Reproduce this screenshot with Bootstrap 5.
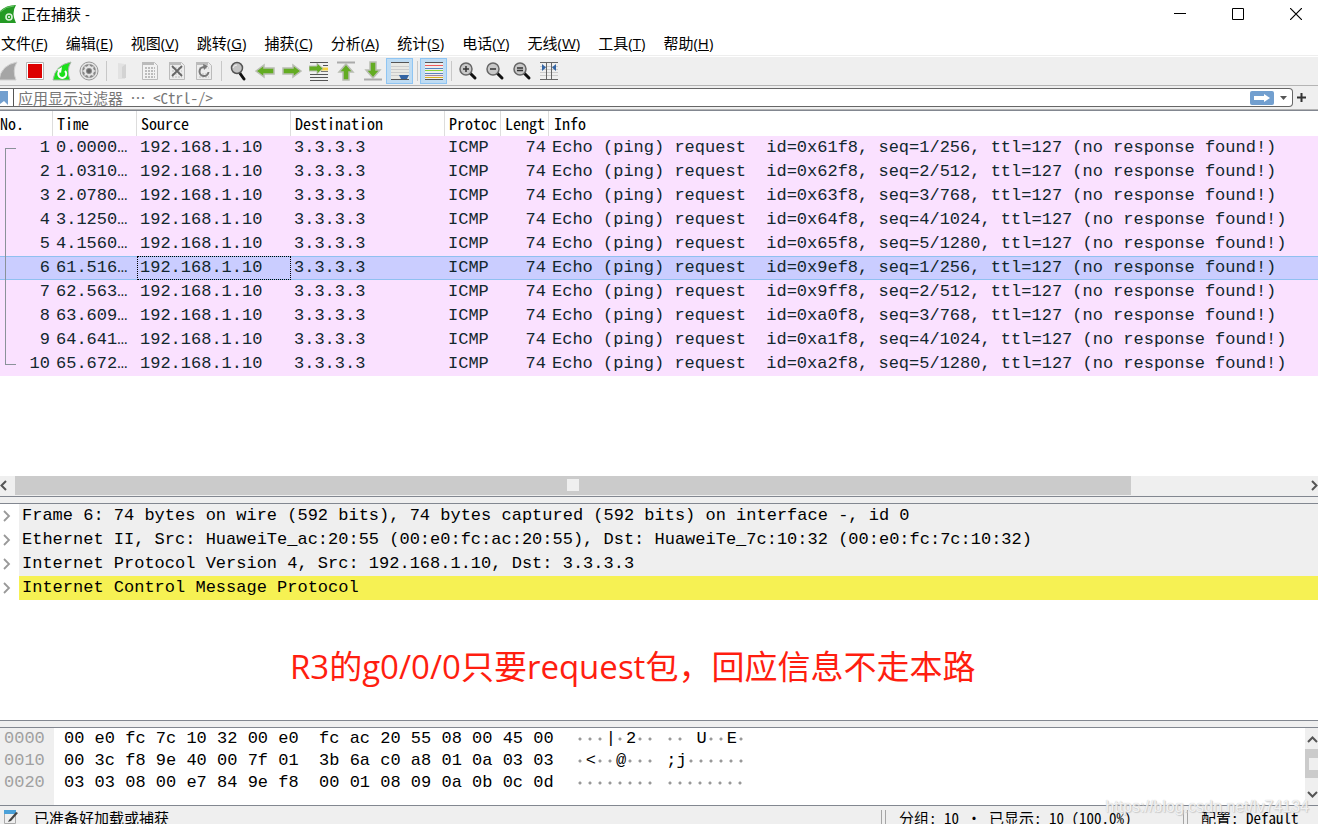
<!DOCTYPE html>
<html lang="zh-CN">
<head>
<meta charset="utf-8">
<meta name="viewport" content="width=device-width, initial-scale=1">
<title>正在捕获 -</title>
<link rel="stylesheet" href="https://cdn.jsdelivr.net/npm/bootstrap@5.3.0/dist/css/bootstrap.min.css">
<style>
:root{--chrome:#efefef;--line:#828790;--mono:"Noto Sans Mono CJK SC","Liberation Mono","Noto Sans CJK SC",monospace;--data:"Liberation Mono","Noto Sans CJK SC",monospace;--ui:"Open Sans","Noto Sans CJK SC",sans-serif}
body{overflow:hidden;background:#fff;color:#000;font-family:var(--ui);font-size:15px;line-height:20px}
/* the status bar runs slightly past the lower window edge */
.shell{height:calc(100vh + 6px)}
.title-bar{height:28px}
.title-bar .caption-btn{width:44px;height:28px;margin-left:14px}
.flat{border:0;background:none;padding:0;color:inherit;display:flex;align-items:center;justify-content:center;flex:none}
.menu-bar{height:28px;border-bottom:1px solid #eee;padding-top:5px;padding-left:1px;gap:18px}
.menu-bar a{color:#000;text-decoration:none;white-space:nowrap}
.tool-bar{height:30px;background:var(--chrome);border-bottom:1px solid #b4b4b4;border-top:1px solid #fff;margin-left:-6px}
.tool-bar button{width:27px;height:26px}
.tool-bar button.on{background:#bfdcf3;border:1px solid #8fc5f3}
.tool-sep{width:7px;height:20px;flex:none;background:linear-gradient(#c8c8c8,#c8c8c8) 4px 0/1px 100% no-repeat}
.filter-bar{height:24px;background:var(--chrome);padding:2px 0;border-bottom:1px solid #b4b4b4}
.filter-box{background:#fff;border:1px solid #666;border-left:0;border-radius:0 4px 4px 0;height:19px}
.filter-box input{border:0;outline:0;padding:0 4px;font-family:var(--mono);font-weight:300;font-size:15px;line-height:16px;height:17px;border-left:1px solid #555;min-width:0}
.filter-box input::placeholder{color:#777;opacity:1}
.bookmark{width:13px;height:17px}
.packet-pane{flex:1 1 386px;min-height:0;border-top:1px solid var(--line);border-bottom:1px solid var(--line)}
.packets{table-layout:fixed;width:100%;border-collapse:separate;border-spacing:0;font-family:var(--data);font-size:17px;line-height:24px;white-space:pre}
.packets th{font-family:var(--mono);font-size:16px;font-weight:300;height:25px;line-height:25px;padding:0 0 0 4px;border-right:1px solid #ddd;overflow:hidden}
.packets th:first-child{padding-left:0}
.packets th:last-child{border:0;padding-left:5px}
.packets td{height:24px;line-height:22px;padding:0 0 0 3px;background:#fae1ff;color:#12272e;border:solid transparent;border-width:1px 0}
.packets td.num{text-align:right;padding:0 3px 0 0}
.packets .sel td{background:#cacdff;border-color:#90c0f0}
.packets .sel td.focus-cell{outline:1px dotted #000;outline-offset:-1px}
.c-no{width:53px}.c-time{width:84px}.c-addr{width:154px}.c-proto{width:56px}.c-len{width:48px}
.conversation{position:absolute;left:5px;top:37px;width:11px;height:217px;border:1px solid #8a9299;border-right:0}
.hscroll{height:20px;background:var(--chrome)}
.hscroll .thumb,.vscroll .thumb{background:#cbcbcb;display:flex;align-items:center;justify-content:center}
.hscroll .thumb{width:84.7%;height:19px}
.knob{width:12px;height:12px;background:#efefef;flex:none}
.splitter{height:6px;background:var(--chrome);flex:none}
.detail-pane{flex:1 1 218px;min-height:0;border-top:1px solid var(--line);border-bottom:1px solid var(--line);font-family:var(--data);font-size:17px;line-height:24px}
.tree-row{height:24px;white-space:pre}
.tree-row button{width:19px;padding-right:6px}
.tree-row .label-text{background:var(--chrome);padding-left:3px}
.tree-row.hot .label-text{background:#f6f153}
.note{font-family:var(--ui);font-size:33px;line-height:48px;color:#ff1e10;padding:43px 0 0 22%;white-space:nowrap}
.hex-pane{height:79px;flex:none;border-top:1px solid var(--line);border-bottom:1px solid var(--line);font-family:var(--data);font-size:17px;line-height:22px;white-space:pre}
.offsets{background:var(--chrome);color:#a0a0a0;width:54px;padding-left:4px}
.bytes{padding-left:10px}
.ascii{padding-left:22px}
.ascii i{display:inline-block;width:10px;height:22px;vertical-align:top;background:radial-gradient(circle at 4px 11px,#999 1px,transparent 2px)}
.vscroll{width:13px;background:var(--chrome);overflow:hidden}
.vscroll .thumb{height:29px}
.status-bar{height:24px;flex:none;background:var(--chrome);font-family:var(--mono);font-weight:300;font-size:15px;line-height:24px;white-space:pre}
.grip{width:5px;height:18px;border:solid #a5a5a5;border-width:0 1px;margin-top:4px}
.st-packets{width:302px}.st-profile{width:135px}
.st-packets span,.st-profile span{padding-left:13px}
.url-mark{position:absolute;right:9px;bottom:7px;color:rgba(255,255,255,.8);text-shadow:0 0 1px #bbb,1px 1px 1px #ccc;font-family:"Liberation Sans",sans-serif;font-size:16px}
svg{display:block;flex:none}
</style>
</head>
<body>
<div class="shell d-flex flex-column">
<header class="title-bar d-flex align-items-center flex-shrink-0">
<svg width="17" height="20" viewBox="0 0 17 20"><path d="M0 7Q6 1 16 1Q11 9 16 19H0Z" fill="#249a24"/><path d="M0 8Q6 2 14 2" stroke="#69c468" fill="none"/><circle cx="9" cy="13" r="3" fill="none" stroke="#d9f2d9" stroke-width="1.6"/><circle cx="9" cy="13" r="1" fill="#fff"/></svg>
<span class="ps-1 me-auto">正在捕获 -</span>
<button class="flat caption-btn" aria-label="最小化"><svg width="12" height="12"><path d="M0 5.500H12" stroke="#000"/></svg></button>
<button class="flat caption-btn" aria-label="最大化"><svg width="12" height="12"><path d="M.5.5h11v11h-11z" fill="none" stroke="#000"/></svg></button>
<button class="flat caption-btn" aria-label="关闭"><svg width="12" height="12"><path d="M0 0l12 12M12 0L0 12" stroke="#000" stroke-width="1.2"/></svg></button>
</header>
<nav class="menu-bar d-flex flex-shrink-0">
<a href="#">文件(<u>F</u>)</a><a href="#">编辑(<u>E</u>)</a><a href="#">视图(<u>V</u>)</a><a href="#">跳转(<u>G</u>)</a><a href="#">捕获(<u>C</u>)</a><a href="#">分析(<u>A</u>)</a><a href="#">统计(<u>S</u>)</a><a href="#">电话(<u>Y</u>)</a><a href="#">无线(<u>W</u>)</a><a href="#">工具(<u>T</u>)</a><a href="#">帮助(<u>H</u>)</a>
</nav>
<div class="tool-bar d-flex align-items-center flex-shrink-0" role="toolbar">
<button class="flat" aria-label="开始"><svg width="20" height="20"><path d="M1 19Q3 4 19 1Q14 9 18 19Z" fill="#a5a5a5" stroke="#d2d2d2"/></svg></button>
<button class="flat" aria-label="停止"><svg width="20" height="20"><path d="M1.500 1.500h17v17h-17z" fill="#fff" stroke="#b5b5b5"/><path d="M3 3h14v14H3z" fill="#d00"/></svg></button>
<button class="flat" aria-label="重新开始"><svg width="20" height="20"><path d="M1 19Q3 4 19 1Q14 9 18 19Z" fill="#1be01b" stroke="#a9b5a9"/><path d="M7.500 10A4 4 0 1 0 13 10" fill="none" stroke="#fff" stroke-width="2"/><path d="M10 6l-1 6-4-3z" fill="#fff"/></svg></button>
<button class="flat" aria-label="选项"><svg width="20" height="20"><circle cx="10" cy="10" r="9" fill="#e4e4e4" stroke="#999"/><circle cx="10" cy="10" r="7" fill="#888"/><circle cx="10" cy="10" r="4" fill="#888" stroke="#e4e4e4" stroke-width="2"/><path d="M10 3.500v2.500M10 14v2.500M3.500 10H6M14 10h2.500M5.500 5.500l2 2M12.500 12.500l2 2M14.500 5.500l-2 2M5.500 14.500l2-2" stroke="#e4e4e4" stroke-width="1.500"/><circle cx="10" cy="10" r="2" fill="#666"/></svg></button>
<span class="tool-sep"></span>
<button class="flat" aria-label="打开"><svg width="20" height="20"><path d="M5 2l7 1v15H5z" fill="#e2e2e2"/><path d="M9 6l4-3v14H9z" fill="#d3d3d3"/></svg></button>
<button class="flat" aria-label="保存"><svg width="20" height="20"><path d="M2.500 1.500h12l3 3v14h-15z" fill="#f2f2f2" stroke="#bbb"/><path d="M2 1h12v3H2z" fill="#bbb"/><path d="M5 7h10M5 10h10M5 13h10M5 16h10" stroke="#bcbcbc" stroke-width="2" stroke-dasharray="2 1"/></svg></button>
<button class="flat" aria-label="关闭文件"><svg width="20" height="20"><path d="M2.500 1.500h12l3 3v14h-15z" fill="#ececec" stroke="#bbb"/><path d="M2 1h12v3H2z" fill="#bbb"/><path d="M5 7h10M5 10h10M5 13h10M5 16h10" stroke="#d5d5d5" stroke-width="2" stroke-dasharray="2 1"/><path d="M5 5l10 10M15 5L5 15" stroke="#666" stroke-width="1.800"/></svg></button>
<button class="flat" aria-label="重新加载"><svg width="20" height="20"><path d="M2.500 1.500h12l3 3v14h-15z" fill="#ececec" stroke="#bbb"/><path d="M2 1h12v3H2z" fill="#bbb"/><path d="M5 7h10M5 13h10M5 16h10" stroke="#d5d5d5" stroke-width="2" stroke-dasharray="2 1"/><path d="M10 6A4.500 4.500 0 1 0 14.500 11" fill="none" stroke="#777" stroke-width="2"/><path d="M9 3l5 2-4 4z" fill="#777"/></svg></button>
<span class="tool-sep"></span>
<button class="flat" aria-label="查找"><svg width="20" height="20"><path d="M11 11l5 7" stroke="#111" stroke-width="3" stroke-linecap="round"/><circle cx="9" cy="7" r="5.500" fill="#c4c4c4" stroke="#555" stroke-width="1.500"/><path d="M5 7a4 4 0 0 1 4-3" stroke="#eee" fill="none"/></svg></button>
<button class="flat" aria-label="上一个"><svg width="20" height="20"><path d="M1 10l8-6v3h10v6H9v3z" fill="#63ac22" stroke="#b9bdb3" stroke-width="1.500"/></svg></button>
<button class="flat" aria-label="下一个"><svg width="20" height="20"><path d="M19 10l-8-6v3H1v6h10v3z" fill="#63ac22" stroke="#b9bdb3" stroke-width="1.500"/></svg></button>
<button class="flat" aria-label="转到分组"><svg width="20" height="20"><path d="M1 1.500h18M14 4.500h5M1 13.500h18M1 16.500h18M1 19.500h18" stroke="#555"/><path d="M12 8h7" stroke="#f5d442" stroke-width="3"/><path d="M12 10.500h7" stroke="#777"/><path d="M14 7.500L8 2v3H0v5h8v3z" fill="#63ac22" stroke="#b9bdb3"/></svg></button>
<button class="flat" aria-label="第一个分组"><svg width="20" height="20"><path d="M1 1.500h18" stroke="#aaa" stroke-width="2"/><path d="M10 3l7 8h-4v8H7v-8H3z" fill="#63ac22" stroke="#b9bdb3" stroke-width="1.500"/></svg></button>
<button class="flat" aria-label="最新分组"><svg width="20" height="20"><path d="M1 18.500h18" stroke="#aaa" stroke-width="2"/><path d="M10 17l7-8h-4V1H7v8H3z" fill="#63ac22" stroke="#b9bdb3" stroke-width="1.500"/></svg></button>
<button class="flat on" aria-label="自动滚动"><svg width="20" height="20"><path d="M1 2h18v17H1z" fill="#e9e9e4"/><path d="M1 5.500h18M1 8.500h18M1 11.500h18M1 14.500h18" stroke="#ccc"/><path d="M1 1.500h18M1 18.500h18" stroke="#555"/><path d="M9 14h10l-2 4h-6z" fill="#3465a4"/></svg></button>
<span class="tool-sep"></span>
<button class="flat on" aria-label="着色"><svg width="20" height="20"><path d="M1 1h18v18H1z" fill="#eee"/><path d="M1 1.500h18M1 18.500h18" stroke="#555"/><path d="M1 4.500h18" stroke="#ef5959"/><path d="M1 7.500h18" stroke="#5584c0"/><path d="M1 9.500h18" stroke="#8ad83a"/><path d="M1 12.500h18" stroke="#5584c0"/><path d="M1 14.500h18" stroke="#a283a0"/><path d="M1 16.500h18" stroke="#d8b020"/></svg></button>
<span class="tool-sep"></span>
<button class="flat" aria-label="放大"><svg width="20" height="20"><path d="M12 12l5 5" stroke="#111" stroke-width="3" stroke-linecap="round"/><circle cx="8" cy="8" r="6" fill="#c8c8c8" stroke="#666" stroke-width="1.500"/><path d="M5 8h6M8 5v6" stroke="#333" stroke-width="1.500"/></svg></button>
<button class="flat" aria-label="缩小"><svg width="20" height="20"><path d="M12 12l5 5" stroke="#111" stroke-width="3" stroke-linecap="round"/><circle cx="8" cy="8" r="6" fill="#c8c8c8" stroke="#666" stroke-width="1.500"/><path d="M5 8h6" stroke="#333" stroke-width="1.500"/></svg></button>
<button class="flat" aria-label="原始大小"><svg width="20" height="20"><path d="M12 12l5 5" stroke="#111" stroke-width="3" stroke-linecap="round"/><circle cx="8" cy="8" r="6" fill="#c8c8c8" stroke="#666" stroke-width="1.500"/><path d="M5 7h6M5 9.500h6" stroke="#333" stroke-width="1.500"/></svg></button>
<button class="flat" aria-label="调整列宽"><svg width="20" height="20"><path d="M1 5.500h18M1 8.500h18M1 11.500h18M1 14.500h18" stroke="#ccc"/><path d="M1 1.500h18M1 18.500h18M7.500 2v16M12.500 2v16" stroke="#666"/><path d="M3 3l4 3.500L3 10zM17 3l-4 3.500 4 3.500z" fill="#3465a4"/></svg></button>
</div>
<div class="filter-bar d-flex align-items-center flex-shrink-0">
<div class="filter-box d-flex align-items-center flex-grow-1">
<button class="flat bookmark justify-content-start" aria-label="书签"><svg width="9" height="14"><path d="M0 0h8v14l-4-4-4 3z" fill="#729fcf"/></svg></button>
<input class="flex-grow-1" type="text" aria-label="显示过滤器" placeholder="应用显示过滤器 … &lt;Ctrl-/&gt;">
<button class="flat" aria-label="应用"><svg width="24" height="14"><rect width="24" height="14" rx="2" fill="#729fcf"/><path d="M4 5h10V3l6 4-6 4V9H4z" fill="#fff"/></svg></button>
<button class="flat px-1" aria-label="历史"><svg width="10" height="6"><path d="M2 1h7l-3.500 4z" fill="#555"/></svg></button>
</div>
<button class="flat px-1 me-2" aria-label="添加"><svg width="9" height="9"><path d="M0 4.500h9M4.500 0v9" stroke="#333" stroke-width="2"/></svg></button>
</div>
<section class="packet-pane d-flex flex-column position-relative">
<table class="packets">
<colgroup><col class="c-no"><col class="c-time"><col class="c-addr"><col class="c-addr"><col class="c-proto"><col class="c-len"><col></colgroup>
<thead><tr><th>No.</th><th>Time</th><th>Source</th><th>Destination</th><th>Protoc</th><th>Lengt</th><th>Info</th></tr></thead>
<tbody>
<tr><td class="num">1</td><td>0.0000…</td><td>192.168.1.10</td><td>3.3.3.3</td><td>ICMP</td><td class="num">74</td><td>Echo (ping) request  id=0x61f8, seq=1/256, ttl=127 (no response found!)</td></tr>
<tr><td class="num">2</td><td>1.0310…</td><td>192.168.1.10</td><td>3.3.3.3</td><td>ICMP</td><td class="num">74</td><td>Echo (ping) request  id=0x62f8, seq=2/512, ttl=127 (no response found!)</td></tr>
<tr><td class="num">3</td><td>2.0780…</td><td>192.168.1.10</td><td>3.3.3.3</td><td>ICMP</td><td class="num">74</td><td>Echo (ping) request  id=0x63f8, seq=3/768, ttl=127 (no response found!)</td></tr>
<tr><td class="num">4</td><td>3.1250…</td><td>192.168.1.10</td><td>3.3.3.3</td><td>ICMP</td><td class="num">74</td><td>Echo (ping) request  id=0x64f8, seq=4/1024, ttl=127 (no response found!)</td></tr>
<tr><td class="num">5</td><td>4.1560…</td><td>192.168.1.10</td><td>3.3.3.3</td><td>ICMP</td><td class="num">74</td><td>Echo (ping) request  id=0x65f8, seq=5/1280, ttl=127 (no response found!)</td></tr>
<tr class="sel"><td class="num">6</td><td>61.516…</td><td class="focus-cell">192.168.1.10</td><td>3.3.3.3</td><td>ICMP</td><td class="num">74</td><td>Echo (ping) request  id=0x9ef8, seq=1/256, ttl=127 (no response found!)</td></tr>
<tr><td class="num">7</td><td>62.563…</td><td>192.168.1.10</td><td>3.3.3.3</td><td>ICMP</td><td class="num">74</td><td>Echo (ping) request  id=0x9ff8, seq=2/512, ttl=127 (no response found!)</td></tr>
<tr><td class="num">8</td><td>63.609…</td><td>192.168.1.10</td><td>3.3.3.3</td><td>ICMP</td><td class="num">74</td><td>Echo (ping) request  id=0xa0f8, seq=3/768, ttl=127 (no response found!)</td></tr>
<tr><td class="num">9</td><td>64.641…</td><td>192.168.1.10</td><td>3.3.3.3</td><td>ICMP</td><td class="num">74</td><td>Echo (ping) request  id=0xa1f8, seq=4/1024, ttl=127 (no response found!)</td></tr>
<tr><td class="num">10</td><td>65.672…</td><td>192.168.1.10</td><td>3.3.3.3</td><td>ICMP</td><td class="num">74</td><td>Echo (ping) request  id=0xa2f8, seq=5/1280, ttl=127 (no response found!)</td></tr>
</tbody>
</table>
<span class="conversation"></span>
<div class="hscroll d-flex mt-auto">
<button class="flat" aria-label="向左"><svg width="15" height="19"><path d="M6 5L1.500 9.500 6 14" fill="none" stroke="#555" stroke-width="2"/></svg></button>
<div class="thumb me-auto"><span class="knob"></span></div>
<button class="flat" aria-label="向右"><svg width="8" height="19"><path d="M2 5l4.500 4.500L2 14" fill="none" stroke="#555" stroke-width="2"/></svg></button>
</div>
</section>
<div class="splitter"></div>
<section class="detail-pane">
<div class="tree-row d-flex"><button class="flat" aria-label="展开"><svg width="8" height="12"><path d="M1 1l5 5-5 5" fill="none" stroke="#999" stroke-width="1.800"/></svg></button><span class="label-text flex-grow-1">Frame 6: 74 bytes on wire (592 bits), 74 bytes captured (592 bits) on interface -, id 0</span></div>
<div class="tree-row d-flex"><button class="flat" aria-label="展开"><svg width="8" height="12"><path d="M1 1l5 5-5 5" fill="none" stroke="#999" stroke-width="1.800"/></svg></button><span class="label-text flex-grow-1">Ethernet II, Src: HuaweiTe_ac:20:55 (00:e0:fc:ac:20:55), Dst: HuaweiTe_7c:10:32 (00:e0:fc:7c:10:32)</span></div>
<div class="tree-row d-flex"><button class="flat" aria-label="展开"><svg width="8" height="12"><path d="M1 1l5 5-5 5" fill="none" stroke="#999" stroke-width="1.800"/></svg></button><span class="label-text flex-grow-1">Internet Protocol Version 4, Src: 192.168.1.10, Dst: 3.3.3.3</span></div>
<div class="tree-row hot d-flex"><button class="flat" aria-label="展开"><svg width="8" height="12"><path d="M1 1l5 5-5 5" fill="none" stroke="#999" stroke-width="1.800"/></svg></button><span class="label-text flex-grow-1">Internet Control Message Protocol</span></div>
<div class="note">R3的g0/0/0只要request包，回应信息不走本路</div>
</section>
<div class="splitter"></div>
<section class="hex-pane d-flex">
<div class="offsets">0000
0010
0020</div>
<div class="bytes">00 e0 fc 7c 10 32 00 e0  fc ac 20 55 08 00 45 00
00 3c f8 9e 40 00 7f 01  3b 6a c0 a8 01 0a 03 03
03 03 08 00 e7 84 9e f8  00 01 08 09 0a 0b 0c 0d</div>
<div class="ascii me-auto"><i></i><i></i><i></i>|<i></i>2<i></i><i></i> <i></i><i></i> U<i></i><i></i>E<i></i>
<i></i>&lt;<i></i><i></i>@<i></i><i></i><i></i> ;j<i></i><i></i><i></i><i></i><i></i><i></i>
<i></i><i></i><i></i><i></i><i></i><i></i><i></i><i></i> <i></i><i></i><i></i><i></i><i></i><i></i><i></i><i></i></div>
<div class="vscroll d-flex flex-column">
<button class="flat" aria-label="向上"><svg width="18" height="21"><path d="M5 14l4.500-4.500L14 14" fill="none" stroke="#555" stroke-width="2"/></svg></button>
<div class="thumb justify-content-start ps-1"><span class="knob"></span></div>
<button class="flat mt-auto" aria-label="向下"><svg width="18" height="21"><path d="M5 8l4.500 4.500L14 8" fill="none" stroke="#555" stroke-width="2"/></svg></button>
</div>
</section>
<footer class="status-bar d-flex">
<button class="flat px-1 align-items-start pt-1" aria-label="捕获文件注释"><svg width="14" height="14"><path d="M.5.5h11v13H.5z" fill="#eee" stroke="#aaa"/><path d="M0 0h12v4H0z" fill="#4aa0d8"/><path d="M5 10l7-8 2 1-7 8-3 1z" fill="#444"/></svg></button>
<span class="ps-2 ms-1 me-auto">已准备好加载或捕获</span>
<div class="st-packets d-flex"><i class="grip"></i><span>分组: 10 · 已显示: 10 (100.0%)</span></div>
<div class="st-profile d-flex"><i class="grip"></i><span>配置: Default</span></div>
</footer>
</div>
<div class="url-mark">https://blog.csdn.net/lv74134</div>
<script src="https://cdn.jsdelivr.net/npm/bootstrap@5.3.0/dist/js/bootstrap.bundle.min.js"></script>
</body>
</html>
